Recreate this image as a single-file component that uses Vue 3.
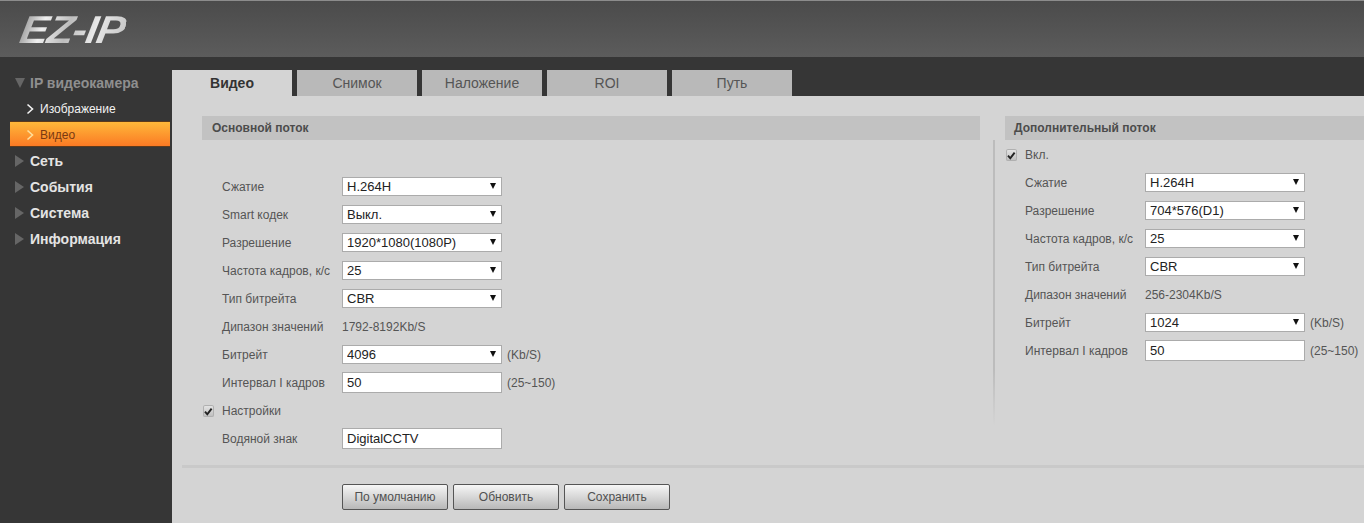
<template>
  <div class="page">
    <header class="top">
      <span class="logo">EZ-IP</span>
    </header>
    <div class="body">
      <aside class="side">
        <div class="group open"><i class="tri down"></i>IP видеокамера</div>
        <div class="sub">
          <svg class="chev" width="8" height="12" viewBox="0 0 8 12"><path d="M1.5 1.5L6.5 6L1.5 10.5" fill="none" stroke="currentColor" stroke-width="1.6" /></svg>
          Изображение
        </div>
        <div class="sub active">
          <svg class="chev" width="8" height="12" viewBox="0 0 8 12"><path d="M1.5 1.5L6.5 6L1.5 10.5" fill="none" stroke="currentColor" stroke-width="1.6" /></svg>
          Видео
        </div>
        <div v-for="item in menu" :key="item" class="group"><i class="tri"></i>{{ item }}</div>
      </aside>
      <main class="main">
        <nav class="tabs">
          <div v-for="(tab, i) in tabs" :key="tab" class="tab" :class="{ current: i === 0 }">{{ tab }}</div>
        </nav>
        <div class="content">
          <div class="panels">
            <section class="panel left">
              <h3 class="head first">Основной поток</h3>
              <template v-for="row in mainRows" :key="row.label">
                <div class="row" :class="{ check: row.type === 'check' }">
                  <span v-if="row.type === 'check'" class="box">
                    <svg width="11" height="11" viewBox="0 0 11 11"><path d="M2 5.6L4.3 8.3L8.6 2.6" fill="none" stroke="#222" stroke-width="1.9" /></svg>
                  </span>
                  <label class="name">{{ row.label }}</label>
                  <div v-if="row.type === 'select'" class="select">
                    <select><option>{{ row.value }}</option></select>
                  </div>
                  <input v-else-if="row.type === 'input'" class="field" :value="row.value" />
                  <span v-else-if="row.type === 'text'" class="plain">{{ row.value }}</span>
                  <span v-if="row.unit" class="unit">{{ row.unit }}</span>
                </div>
              </template>
            </section>
            <div class="split"></div>
            <section class="panel right">
              <h3 class="head second">Дополнительный поток</h3>
              <template v-for="row in subRows" :key="row.label">
                <div class="row" :class="{ check: row.type === 'check' }">
                  <span v-if="row.type === 'check'" class="box">
                    <svg width="11" height="11" viewBox="0 0 11 11"><path d="M2 5.6L4.3 8.3L8.6 2.6" fill="none" stroke="#222" stroke-width="1.9" /></svg>
                  </span>
                  <label class="name">{{ row.label }}</label>
                  <div v-if="row.type === 'select'" class="select">
                    <select><option>{{ row.value }}</option></select>
                  </div>
                  <input v-else-if="row.type === 'input'" class="field" :value="row.value" />
                  <span v-else-if="row.type === 'text'" class="plain">{{ row.value }}</span>
                  <span v-if="row.unit" class="unit">{{ row.unit }}</span>
                </div>
              </template>
            </section>
          </div>
          <div class="footer">
            <button class="btn">По умолчанию</button>
            <button class="btn">Обновить</button>
            <button class="btn">Сохранить</button>
          </div>
        </div>
      </main>
    </div>
  </div>
</template>

<script setup>
const menu = ['Сеть', 'События', 'Система', 'Информация']
const tabs = ['Видео', 'Снимок', 'Наложение', 'ROI', 'Путь']

const mainRows = [
  { label: 'Сжатие', type: 'select', value: 'H.264H' },
  { label: 'Smart кодек', type: 'select', value: 'Выкл.' },
  { label: 'Разрешение', type: 'select', value: '1920*1080(1080P)' },
  { label: 'Частота кадров, к/с', type: 'select', value: '25' },
  { label: 'Тип битрейта', type: 'select', value: 'CBR' },
  { label: 'Дипазон значений', type: 'text', value: '1792-8192Kb/S' },
  { label: 'Битрейт', type: 'select', value: '4096', unit: '(Kb/S)' },
  { label: 'Интервал I кадров', type: 'input', value: '50', unit: '(25~150)' },
  { label: 'Настройки', type: 'check' },
  { label: 'Водяной знак', type: 'input', value: 'DigitalCCTV' },
]

const subRows = [
  { label: 'Вкл.', type: 'check' },
  { label: 'Сжатие', type: 'select', value: 'H.264H' },
  { label: 'Разрешение', type: 'select', value: '704*576(D1)' },
  { label: 'Частота кадров, к/с', type: 'select', value: '25' },
  { label: 'Тип битрейта', type: 'select', value: 'CBR' },
  { label: 'Дипазон значений', type: 'text', value: '256-2304Kb/S' },
  { label: 'Битрейт', type: 'select', value: '1024', unit: '(Kb/S)' },
  { label: 'Интервал I кадров', type: 'input', value: '50', unit: '(25~150)' },
]
</script>

<style>
html,
body {
  margin: 0;
  overflow: hidden;
  background: #363636;
}
</style>

<style scoped>
.page {
  width: 1364px;
  height: 523px;
  overflow: hidden;
  font-family: "Liberation Sans", Arial, sans-serif;
  font-size: 12px;
  color: #555;
}

.top {
  height: 57px;
  box-sizing: border-box;
  padding: 9px 0 0 17px;
  background: linear-gradient(#4b4b4b, #5c5c5c);
  border-top: 1px solid #8c8c8c;
}

.logo {
  display: inline-block;
  font-size: 39px;
  line-height: 40px;
  font-weight: bold;
  font-style: italic;
  letter-spacing: -1px;
  transform: skewX(-10deg) scaleX(1.1);
  transform-origin: left bottom;
  background: linear-gradient(100deg, #8d8d8d 0%, #efefef 22%, #bdbdbd 45%, #e8e8e8 70%, #c4c4c4 100%);
  -webkit-background-clip: text;
  background-clip: text;
  color: transparent;
}

.body {
  display: flex;
  height: 466px;
}

.side {
  width: 172px;
  flex: none;
  padding-top: 13px;
  box-sizing: border-box;
  background: #363636;
}

.group {
  display: flex;
  align-items: center;
  height: 26px;
  padding-left: 15px;
  font-size: 14px;
  font-weight: bold;
  color: #e4e4e4;
}

.group.open {
  color: #8f8f8f;
}

.tri {
  width: 0;
  height: 0;
  margin-right: 6px;
  border-style: solid;
  border-width: 6px 0 6px 9px;
  border-color: transparent transparent transparent #666;
}

.tri.down {
  margin-right: 5px;
  border-width: 10px 5.5px 0 5.5px;
  border-color: #666 transparent transparent transparent;
}

.sub {
  display: flex;
  align-items: center;
  gap: 6px;
  height: 26px;
  padding-left: 26px;
  color: #f2f2f2;
}

.sub.active {
  height: 24px;
  box-sizing: border-box;
  margin: 0 2px 2px 10px;
  padding: 1px 0 0 16px;
  color: #7a3a12;
  background: linear-gradient(#ffb83a, #fb7a24);
  box-shadow: 0 -1px 0 #5c3a1c, 0 1px 0 #5c3a1c;
}

.sub.active .chev {
  color: #ffdf9c;
}

.main {
  flex: 1;
  min-width: 0;
  display: flex;
  flex-direction: column;
}

.tabs {
  display: flex;
  gap: 5px;
  height: 39px;
  box-sizing: border-box;
  padding-top: 13px;
  background: #363636;
}

.tab {
  width: 120px;
  height: 26px;
  line-height: 26px;
  text-align: center;
  font-size: 14px;
  color: #555;
  background: #b9b9b9;
}

.tab.current {
  font-weight: bold;
  color: #333;
  background: #d4d4d4;
}

.content {
  flex: 1;
  background: #d4d4d4;
}

.panels {
  display: flex;
  height: 369px;
  box-sizing: border-box;
  padding-top: 20px;
  padding-left: 30px;
}

.panel {
  flex: none;
}

.left {
  width: 778px;
  margin-right: 13px;
}

.right {
  flex: 1;
  min-width: 0;
  margin-left: 10px;
}

.split {
  flex: none;
  width: 2px;
  height: 286px;
  margin-top: 24px;
  background: linear-gradient(#bcbcbc 80%, #d4d4d4);
}

.head {
  height: 24px;
  margin: 0;
  padding-left: 10px;
  line-height: 24px;
  font-size: 12px;
  font-weight: bold;
  color: #4c4c4c;
  background: #c2c2c2;
}

.head.first {
  margin-bottom: 33px;
}

.head.second {
  margin-bottom: 1px;
  padding-left: 9px;
}

.row {
  display: flex;
  align-items: center;
  height: 28px;
  padding-left: 20px;
}

.row.check {
  padding-left: 0;
}

.box {
  display: flex;
  align-items: center;
  justify-content: center;
  width: 11px;
  height: 12px;
  margin: 0 8px 0 1px;
  border-radius: 2px;
  background: linear-gradient(#e6e6e6, #bdbdbd);
  box-shadow: inset 0 0 0 1px #b0b0b0;
}

.name {
  width: 120px;
  flex: none;
  white-space: nowrap;
}

.select {
  position: relative;
  width: 160px;
  height: 19px;
  margin-bottom: 1px;
}

.select::after {
  content: "";
  position: absolute;
  top: 6px;
  right: 6px;
  border-style: solid;
  border-width: 6px 3.5px 0 3.5px;
  border-color: #111 transparent transparent transparent;
  pointer-events: none;
}

.select select {
  appearance: none;
  display: block;
  width: 100%;
  height: 100%;
  box-sizing: border-box;
  margin: 0;
  padding: 0 0 0 4px;
  border: 1px solid #ababab;
  border-radius: 0;
  outline: none;
  font: 13px "Liberation Sans", Arial, sans-serif;
  color: #222;
  background: #fff;
}

.field {
  width: 160px;
  height: 21px;
  box-sizing: border-box;
  margin: 0 0 1px;
  padding: 0 4px;
  border: 1px solid #ababab;
  outline: none;
  font: 13px "Liberation Sans", Arial, sans-serif;
  color: #222;
  background: #fff;
}

.unit {
  margin-left: 5px;
  white-space: nowrap;
}

.footer {
  display: flex;
  gap: 5px;
  margin-left: 10px;
  padding: 16px 0 0 160px;
  border-top: 3px solid #c9c9c9;
}

.btn {
  width: 106px;
  height: 26px;
  padding: 0;
  border: 1px solid #555;
  border-radius: 2px;
  font: 12px "Liberation Sans", Arial, sans-serif;
  color: #505050;
  background: linear-gradient(#f6f6f6, #b8b8b8);
}
</style>
